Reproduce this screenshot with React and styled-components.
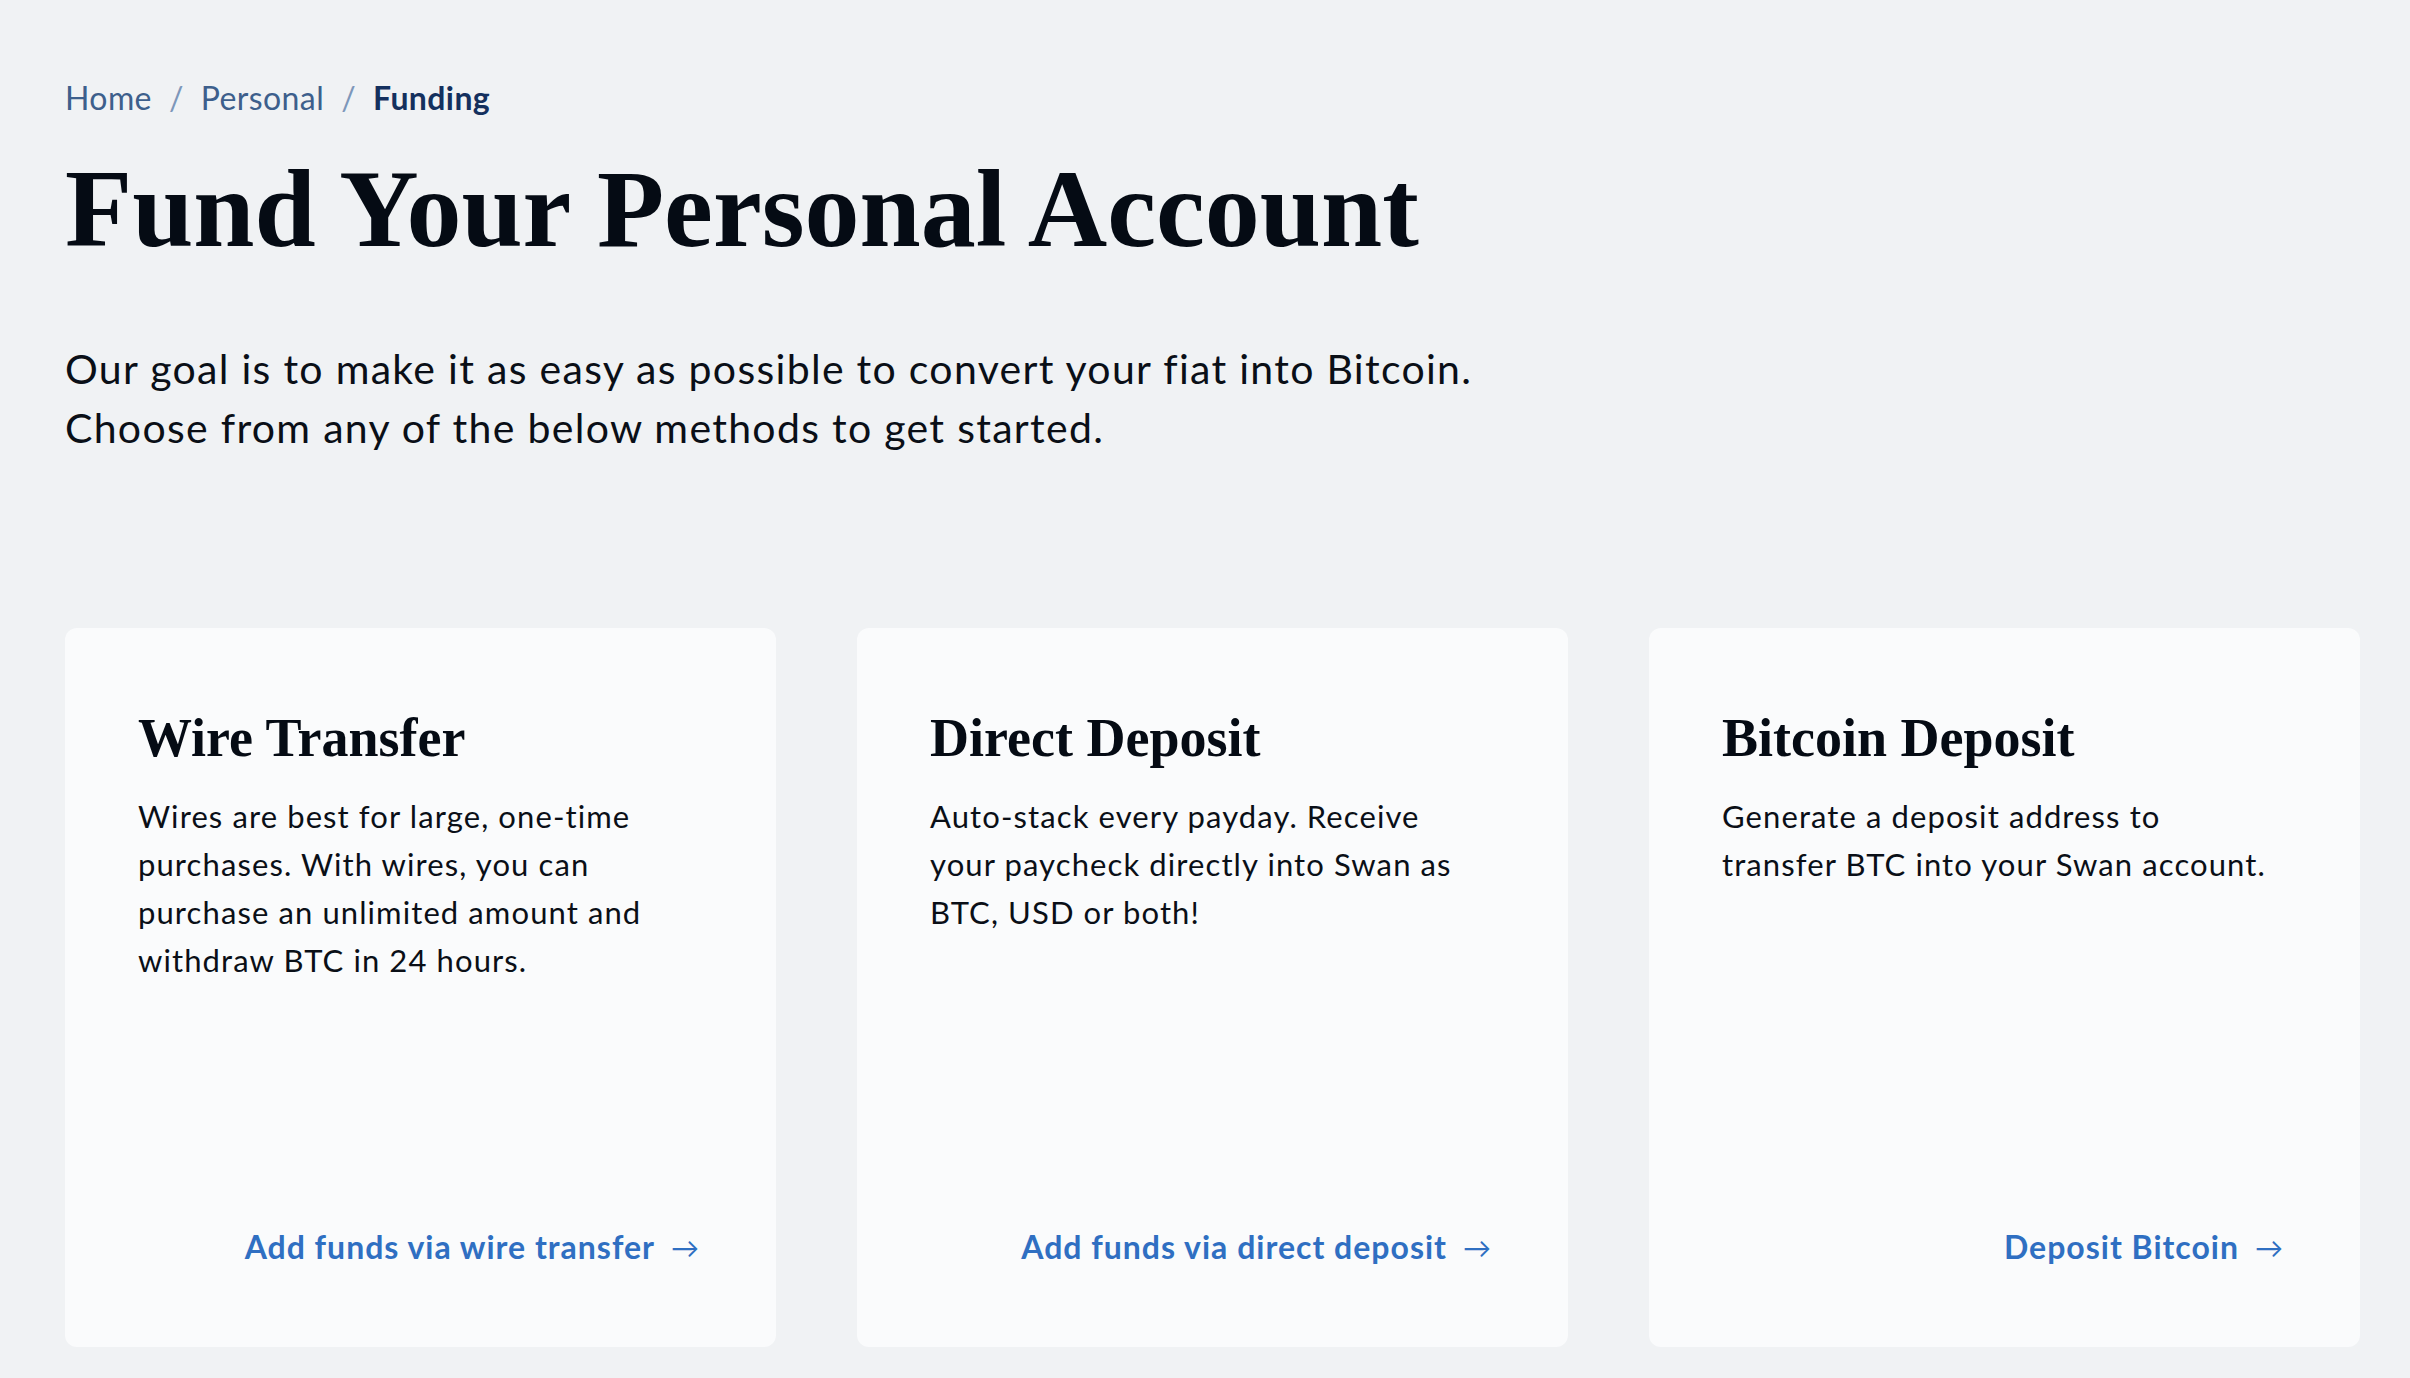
import React from 'react';
import styled, { createGlobalStyle } from 'styled-components';

const GlobalStyle = createGlobalStyle`
  html, body {
    margin: 0;
    padding: 0;
    background: #f0f2f4;
  }
  * {
    box-sizing: border-box;
  }
`;

const methods = [
  {
    title: 'Wire Transfer',
    text: 'Wires are best for large, one-time purchases. With wires, you can purchase an unlimited amount and withdraw BTC in 24 hours.',
    link: 'Add funds via wire transfer',
  },
  {
    title: 'Direct Deposit',
    text: 'Auto-stack every payday. Receive your paycheck directly into Swan as BTC, USD or both!',
    link: 'Add funds via direct deposit',
  },
  {
    title: 'Bitcoin Deposit',
    text: 'Generate a deposit address to transfer BTC into your Swan account.',
    link: 'Deposit Bitcoin',
  },
];

const App = () => {
  return (
    <>
      <GlobalStyle />
      <Page>
        <Breadcrumb>
          <Crumb>Home</Crumb>
          <Slash>/</Slash>
          <Crumb>Personal</Crumb>
          <Slash>/</Slash>
          <Crumb $active>Funding</Crumb>
        </Breadcrumb>
        <Title>Fund Your Personal Account</Title>
        <Lead>
          Our goal is to make it as easy as possible to convert your fiat into Bitcoin.
          <br />
          Choose from any of the below methods to get started.
        </Lead>
        <CardGrid>
          {methods.map((m) => (
            <Card key={m.title}>
              <CardTitle>{m.title}</CardTitle>
              <CardText>{m.text}</CardText>
              <CardLink href="#">
                {m.link}
                <Arrow>→</Arrow>
              </CardLink>
            </Card>
          ))}
        </CardGrid>
      </Page>
    </>
  );
};

const Page = styled.div`
  padding: 78px 50px 31px 65px;
  font-family: 'Lato', 'Liberation Sans', sans-serif;
`;

const Breadcrumb = styled.nav`
  display: flex;
  align-items: baseline;
  gap: 17px;
  font-size: 32px;
  line-height: 40px;
  letter-spacing: 0.4px;
`;

const Crumb = styled.span`
  color: ${(p) => (p.$active ? '#14305e' : '#3d5f8c')};
  font-weight: ${(p) => (p.$active ? 700 : 400)};
`;

const Slash = styled.span`
  color: #7d97ba;
`;

const Title = styled.h1`
  margin: 31px 0 0;
  font-family: 'Liberation Serif', serif;
  font-weight: 700;
  font-size: 110px;
  line-height: 120px;
  color: #050b14;
`;

const Lead = styled.p`
  margin: 70px 0 0;
  font-size: 41px;
  line-height: 59px;
  letter-spacing: 1.3px;
  color: #0a0f17;
`;

const CardGrid = styled.div`
  display: grid;
  grid-template-columns: repeat(3, 711px);
  gap: 81px;
  margin-top: 171px;
`;

const Card = styled.div`
  display: flex;
  flex-direction: column;
  min-height: 719px;
  padding: 78px 77px 80px 73px;
  background: #fafbfc;
  border-radius: 12px;
`;

const CardTitle = styled.h2`
  margin: 0;
  font-family: 'Liberation Serif', serif;
  font-weight: 700;
  font-size: 54px;
  line-height: 64px;
  color: #050b14;
`;

const CardText = styled.p`
  margin: 22px 0 0;
  font-size: 31px;
  line-height: 48px;
  letter-spacing: 1.1px;
  color: #0a0f17;
`;

const CardLink = styled.a`
  margin-top: auto;
  align-self: flex-end;
  display: flex;
  align-items: center;
  gap: 16px;
  font-size: 32px;
  line-height: 40px;
  font-weight: 700;
  letter-spacing: 1px;
  color: #2f6fc2;
  text-decoration: none;
`;

const Arrow = styled.span`
  font-weight: 400;
  font-size: 28px;
  letter-spacing: 0;
`;

export default App;
